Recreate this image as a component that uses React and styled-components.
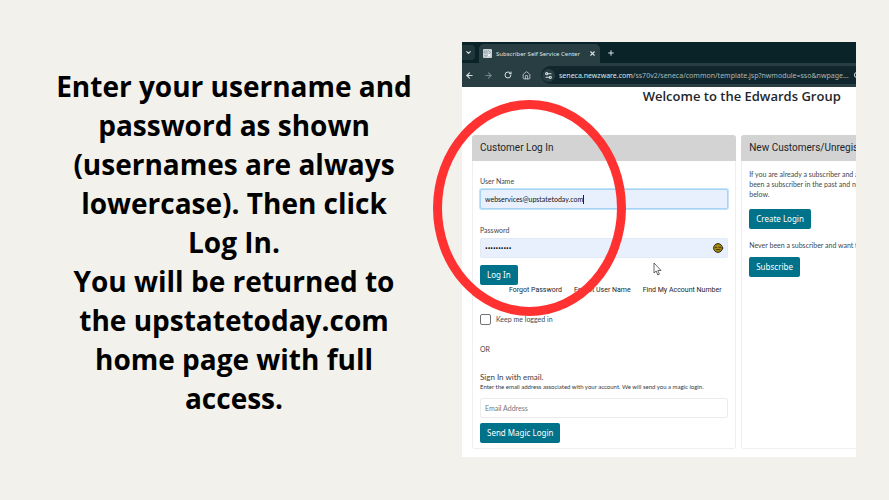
import React from 'react'
import styled, { createGlobalStyle } from 'styled-components'
import { ArrowLeft, ArrowRight, ChevronDown, House, Plus, RotateCw, Settings2, X } from 'lucide-react'


const GlobalStl = createGlobalStyle`
  *, *::before, *::after {
    box-sizing: border-box;
  }

  body {
    margin: 0;
    background: #f2f1ec;
    font-family: Lato, "Open Sans", sans-serif;
  }

  h1, h2, h3, p {
    margin: 0;
  }

  button, input {
    font-family: inherit;
  }
`

const SlideStl = styled.main`
  min-height: 100vh;
  display: grid;
  grid-template-columns: minmax(0, 360fr) minmax(0, 394fr);
  align-items: center;
  gap: 48px;
  padding: 42px 33px 43px 54px;
`

const MessageStl = styled.h1`
  padding-bottom: 14px;
  font-family: "Open Sans", "Noto Sans", sans-serif;
  font-size: 28px;
  font-weight: 700;
  line-height: 39px;
  text-align: center;
  color: #000;
`

const ShotStl = styled.section`
  position: relative;
`

const WindowStl = styled.div`
  overflow: hidden;
  background: #fff;
`

const TabBarStl = styled.div`
  height: 21px;
  display: flex;
  align-items: stretch;
  background: #0a2328;
  color: #dbe5e7;
`

const BarButtonStl = styled.button`
  display: flex;
  align-items: center;
  justify-content: center;
  flex: none;
  width: ${({$width}) => $width || 19}px;
  padding: 0;
  border: 0;
  background: ${({$bg}) => $bg || 'transparent'};
  border-radius: ${({$round}) => $round || '0'};
  color: ${({$muted}) => $muted ? '#6f8388' : '#d5dfe1'};
`

const TabSearchStl = styled.div`
  display: flex;
  padding: 3px 4px 3px 0;
`

const TabStl = styled.div`
  width: 121px;
  display: flex;
  align-items: center;
  gap: 4px;
  padding: 0 0 0 4px;
  margin-top: 2px;
  border-radius: 5px 5px 0 0;
  background: #293e43;
  font-family: "Noto Sans", "Open Sans", sans-serif;
  font-size: 6px;
  white-space: nowrap;
`

const FaviconStl = styled.svg`
  flex: none;
`

const TabTitleStl = styled.span`
  flex: 1;
`

const AddressBarStl = styled.div`
  height: 24px;
  display: flex;
  align-items: center;
  background: #293e43;
`

const AddressStl = styled.div`
  flex: 1;
  min-width: 0;
  height: 18px;
  display: flex;
  align-items: center;
  gap: 4px;
  padding-left: 1px;
  margin-left: 5px;
  border-radius: 9px 0 0 9px;
  background: #10282d;
  font-family: "Noto Sans", "Open Sans", sans-serif;
  font-size: 7px;
  color: #a9b7ba;
  overflow: hidden;
  white-space: nowrap;
`

const HostStl = styled.span`
  color: #dfe7e9;
`

const UrlStl = styled.span`
  flex: 1;
`

const PageStl = styled.div`
  width: 142%;
  padding: 0 10px 8px;
`

const WelcomeStl = styled.h2`
  margin-bottom: 30px;
  font-family: "Open Sans", "Noto Sans", sans-serif;
  font-size: 13px;
  font-weight: 600;
  line-height: 18px;
  text-align: center;
  color: #23272c;
`

const CardsStl = styled.div`
  display: grid;
  grid-template-columns: minmax(0, 264fr) minmax(0, 270fr);
  gap: 5px;
`

const CardStl = styled.section`
  border: 1px solid #efefef;
  border-radius: 3px;
`

const CardTitleStl = styled.h3`
  margin: -1px -1px 0;
  padding: 0 8px;
  border-radius: 3px 3px 0 0;
  background: #d3d3d3;
  font-family: Roboto, "Liberation Sans", sans-serif;
  font-size: 10px;
  font-weight: 400;
  line-height: 26px;
  white-space: nowrap;
  color: #212529;
`

const CardBodyStl = styled.div`
  display: flex;
  flex-direction: column;
  align-items: flex-start;
  padding: ${({$top}) => $top}px 7px 5px;
`

const FieldStl = styled.div`
  width: 100%;
  display: flex;
  flex-direction: column;
  margin-bottom: ${({$gap}) => $gap}px;
`

const LabelStl = styled.label`
  margin-bottom: 3px;
  font-size: 7px;
  line-height: 10px;
  color: #44484c;
`

const InputRowStl = styled.div`
  position: relative;
`

const InputStl = styled.input`
  display: block;
  width: 100%;
  height: 20px;
  padding: 0 4px;
  border: 1px solid ${({$filled}) => $filled ? '#e3e9f5' : '#ececec'};
  border-radius: 2px;
  outline: 0;
  background: ${({$filled}) => $filled ? '#e8f0fe' : '#fff'};
  font-size: 7px;
  color: #111;

  ${({$active}) => $active && `
    border-color: #a6d4f5;
    box-shadow: 0 0 0 1px #c4e2f8;
  `}

  &[type="password"] {
    font-family: "Noto Sans", "Open Sans", sans-serif;
  }

  &::placeholder {
    color: #73787d;
    opacity: 1;
  }
`

const CaretStl = styled.i`
  position: absolute;
  left: 103px;
  top: 6px;
  width: 1px;
  height: 9px;
  background: #222;
`

const FieldIconStl = styled.svg`
  position: absolute;
  right: 4px;
  top: 5px;
`

const ButtonStl = styled.button`
  height: 20px;
  padding: 0 7px;
  border: 0;
  border-radius: 2px;
  background: #00738a;
  font-family: "Noto Sans", "Open Sans", sans-serif;
  font-size: 8px;
  line-height: 20px;
  white-space: nowrap;
  color: #fff;
`

const LinksStl = styled.nav`
  width: 100%;
  display: flex;
  gap: 12px;
  padding-left: 29px;
  margin-bottom: 18px;
`

const LinkStl = styled.a`
  font-family: Roboto, "Liberation Sans", sans-serif;
  font-size: 7px;
  line-height: 10px;
  white-space: nowrap;
  text-decoration: none;
  color: #212529;
`

const CheckStl = styled.label`
  display: flex;
  align-items: center;
  gap: 5px;
  font-size: 7px;
  line-height: 12px;
  color: #44484c;
`

const CheckboxStl = styled.input`
  appearance: none;
  width: 11px;
  height: 11px;
  margin: 0;
  border: 1px solid #6f7376;
  border-radius: 2px;
  background: #fff;
`

const OrStl = styled.p`
  margin: 19px 0 18px;
  font-size: 7px;
  line-height: 10px;
  color: #44484c;
`

const EmailTitleStl = styled.label`
  font-size: 8px;
  line-height: 10px;
  color: #3c4044;
`

const EmailHintStl = styled.p`
  margin-bottom: 6px;
  font-size: 6px;
  line-height: 10px;
  color: #34383c;
`

const TextStl = styled.p`
  margin: ${({$above}) => $above || 0}px 0 ${({$below}) => $below}px;
  font-size: 7px;
  line-height: 10px;
  white-space: nowrap;
  color: #44484c;
`

const RingStl = styled.div`
  position: absolute;
  left: -29px;
  top: 58px;
  width: 193px;
  height: 216px;
  border: 9px solid #ff3131;
  border-radius: 50%;
  pointer-events: none;
`

const CursorStl = styled.svg`
  position: absolute;
  left: 191px;
  top: 220px;
`

const Favicon = () => (
    <FaviconStl width="9" height="9" viewBox="0 0 9 9" aria-hidden="true">
        <rect width="9" height="9" rx="1" fill="#c9d3d5" />
        <path d="M1 2h3v2H1zM5 1l3 3M2 8l5-4M1 6l2 1" fill="none" stroke="#8fa1a6" strokeWidth="0.8" />
        <circle cx="6" cy="6" r="1" fill="#fff" />
    </FaviconStl>
)

const PasswordIcon = () => (
    <FieldIconStl width="11" height="11" viewBox="0 0 11 11" aria-hidden="true">
        <circle cx="5" cy="5" r="4.4" fill="#a98a0c" stroke="#2f2a18" strokeWidth="1" />
        <path d="M2 4.4h2.2M5.6 4.4h2.4M3 6.6h4.4" stroke="#2f2a18" strokeWidth="0.8" />
        <path d="M9 4l1.6 1L9 6.4z" fill="#2f2a18" />
    </FieldIconStl>
)

const ZoomIcon = () => (
    <FaviconStl width="4" height="8" viewBox="0 0 4 8" aria-hidden="true">
        <circle cx="4" cy="4" r="2.6" fill="none" stroke="#d5dfe1" />
    </FaviconStl>
)

const Browser = () => (
    <>
        <TabBarStl>
            <TabSearchStl>
                <BarButtonStl $width={13} $bg="#20363b" $round="0 4px 4px 0" aria-label="Search tabs">
                    <ChevronDown size={7} strokeWidth={4} />
                </BarButtonStl>
            </TabSearchStl>
            <TabStl>
                <Favicon />
                <TabTitleStl>Subscriber Self Service Center</TabTitleStl>
                <BarButtonStl $width={16} aria-label="Close tab">
                    <X size={7} strokeWidth={4} />
                </BarButtonStl>
            </TabStl>
            <BarButtonStl $width={22} aria-label="New tab">
                <Plus size={8} strokeWidth={3} />
            </BarButtonStl>
        </TabBarStl>
        <AddressBarStl>
            <BarButtonStl $width={15} aria-label="Back">
                <ArrowLeft size={9} strokeWidth={3} />
            </BarButtonStl>
            <BarButtonStl $width={22} $muted aria-label="Forward">
                <ArrowRight size={9} strokeWidth={3} />
            </BarButtonStl>
            <BarButtonStl $width={17} aria-label="Reload">
                <RotateCw size={8} strokeWidth={3} />
            </BarButtonStl>
            <BarButtonStl $width={20} aria-label="Home">
                <House size={9} strokeWidth={2} />
            </BarButtonStl>
            <AddressStl>
                <BarButtonStl $width={13} $bg="#293e43" $round="7px" aria-label="Site settings">
                    <Settings2 size={13} strokeWidth={3} viewBox="-6 -6 36 36" />
                </BarButtonStl>
                <UrlStl>
                    <HostStl>seneca.newzware.com</HostStl>/ss70v2/seneca/common/template.jsp?nwmodule=sso&amp;nwpage...
                </UrlStl>
                <ZoomIcon />
            </AddressStl>
        </AddressBarStl>
    </>
)

const LoginCard = () => (
    <CardStl>
        <CardTitleStl>Customer Log In</CardTitleStl>
        <CardBodyStl $top={15}>
            <FieldStl $gap={16}>
                <LabelStl htmlFor="username">User Name</LabelStl>
                <InputRowStl>
                    <InputStl id="username" $filled $active defaultValue="webservices@upstatetoday.com" />
                    <CaretStl />
                </InputRowStl>
            </FieldStl>
            <FieldStl $gap={7}>
                <LabelStl htmlFor="password">Password</LabelStl>
                <InputRowStl>
                    <InputStl id="password" type="password" $filled defaultValue="••••••••••" />
                    <PasswordIcon />
                </InputRowStl>
            </FieldStl>
            <ButtonStl>Log In</ButtonStl>
            <LinksStl>
                <LinkStl href="#password">Forgot Password</LinkStl>
                <LinkStl href="#username">Forgot User Name</LinkStl>
                <LinkStl href="#account">Find My Account Number</LinkStl>
            </LinksStl>
            <CheckStl>
                <CheckboxStl type="checkbox" />
                Keep me logged in
            </CheckStl>
            <OrStl>OR</OrStl>
            <EmailTitleStl htmlFor="email">Sign In with email.</EmailTitleStl>
            <EmailHintStl>
                Enter the email address associated with your account. We will send you a magic login.
            </EmailHintStl>
            <FieldStl $gap={5}>
                <InputStl id="email" type="email" placeholder="Email Address" />
            </FieldStl>
            <ButtonStl>Send Magic Login</ButtonStl>
        </CardBodyStl>
    </CardStl>
)

const NewCustomerCard = () => (
    <CardStl>
        <CardTitleStl>New Customers/Unregistered</CardTitleStl>
        <CardBodyStl $top={8}>
            <TextStl $below={10}>
                If you are already a subscriber and a<br />
                been a subscriber in the past and ne<br />
                below.
            </TextStl>
            <ButtonStl>Create Login</ButtonStl>
            <TextStl $above={11} $below={7}>Never been a subscriber and want to</TextStl>
            <ButtonStl>Subscribe</ButtonStl>
        </CardBodyStl>
    </CardStl>
)

export default function App() {
    return (
        <>
            <GlobalStl />
            <SlideStl>
                <MessageStl>
                    Enter your username and password as shown (usernames are always lowercase). Then click Log In.
                    <br />
                    You will be returned to the upstatetoday.com home page with full access.
                </MessageStl>
                <ShotStl>
                    <WindowStl>
                        <Browser />
                        <PageStl>
                            <WelcomeStl>Welcome to the Edwards Group</WelcomeStl>
                            <CardsStl>
                                <LoginCard />
                                <NewCustomerCard />
                            </CardsStl>
                        </PageStl>
                    </WindowStl>
                    <RingStl />
                    <CursorStl width="9" height="14" viewBox="0 0 9 14" aria-hidden="true">
                        <path d="M1 1v10l2.2-2 1.6 4 1.6-.8-1.6-3.7H8z" fill="#fff" stroke="#444" strokeWidth="0.8" />
                    </CursorStl>
                </ShotStl>
            </SlideStl>
        </>
    )
}
